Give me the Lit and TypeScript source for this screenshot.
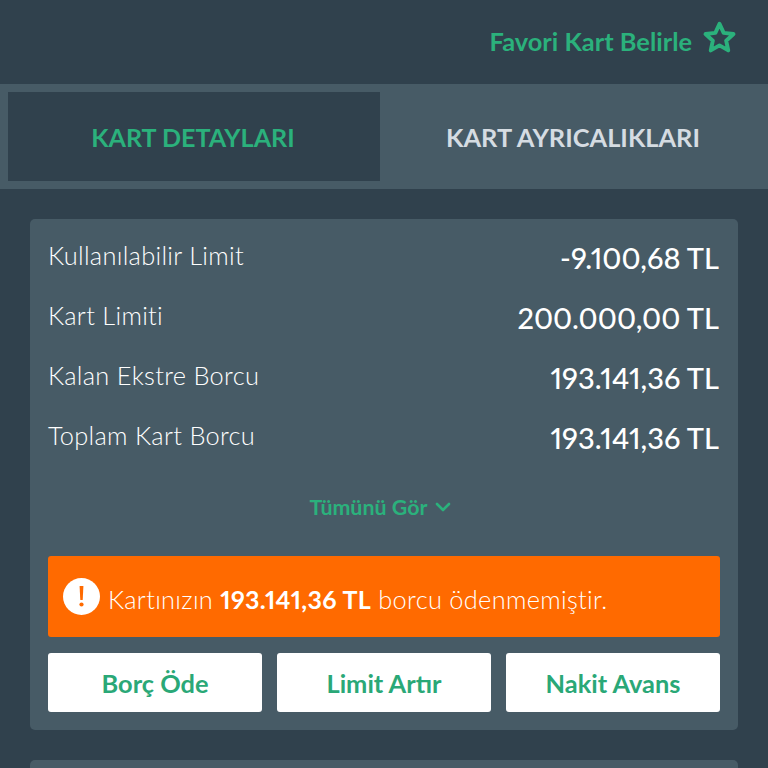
import { LitElement, html, css } from "lit";
import { customElement } from "lit/decorators.js";

const rows = [
  ["Kullanılabilir Limit", "-9.100,68 TL"],
  ["Kart Limiti", "200.000,00 TL"],
  ["Kalan Ekstre Borcu", "193.141,36 TL"],
  ["Toplam Kart Borcu", "193.141,36 TL"],
];

@customElement("app-root")
export class AppRoot extends LitElement {
  static styles = css`
    :host {
      display: block;
      width: 768px;
      height: 768px;
      overflow: hidden;
      background: #30414d;
      font-family: Lato, "Noto Sans", sans-serif;
      font-feature-settings: "pnum" 1;
      font-variant-numeric: proportional-nums;
      color: #fff;
    }
    .fav {
      height: 84px;
      box-sizing: border-box;
      display: flex;
      justify-content: flex-end;
      align-items: center;
      gap: 10px;
      padding: 0 31px 10px 0;
      color: #2bb17c;
      font-size: 25.4px;
      font-weight: 700;
    }
    .fav span { position: relative; top: 4px; }
    .fav svg { display: block; }
    .tabs {
      height: 105px;
      box-sizing: border-box;
      background: #475b66;
      padding: 8px 0 8px 8px;
      display: flex;
    }
    .tab {
      display: flex;
      align-items: center;
      justify-content: center;
      font-size: 25.4px;
      font-weight: 700;
      color: #d5dce2;
      flex: 1;
      padding-right: 2px;
    }
    .tab.on {
      flex: 0 0 372px;
      box-sizing: border-box;
      background: #30414d;
      color: #2bb17c;
      font-size: 25.1px;
    }
    .main { padding: 30px 30px 0; display: flex; flex-direction: column; gap: 30px; }
    .card {
      background: #475b66;
      border-radius: 5px;
      padding: 7px 18px 18px;
      display: flex;
      flex-direction: column;
    }
    .row {
      height: 60px;
      display: flex;
      justify-content: space-between;
      align-items: center;
      padding-right: 1px;
      padding-left: 1px;
    }
    .row .l { font-size: 25.4px; font-weight: 300; letter-spacing: 0.3px; position: relative; top: -1px; left: -1px; }
    .row .v { font-size: 29px; font-weight: 500; position: relative; top: 1px; }
    .more {
      display: flex;
      justify-content: center;
      align-items: center;
      gap: 8px;
      height: 40px;
      margin-top: 21px;
      padding-right: 7px;
      color: #2bb17c;
      font-size: 21.4px;
      font-weight: 700;
    }
    .alert {
      margin-top: 29px;
      height: 81px;
      box-sizing: border-box;
      background: #ff6a00;
      border-radius: 3px;
      display: flex;
      align-items: center;
      gap: 8px;
      padding: 4px 0 0 15px;
      font-size: 25.4px;
      font-weight: 300;
      letter-spacing: 0.3px;
    }
    .alert b { font-size: 25px; font-weight: 700; letter-spacing: 0.3px; }
    .alert svg { flex: none; position: relative; top: -2px; }
    .btns { display: flex; gap: 15px; margin-top: 16px; }
    .btn {
      flex: 1;
      height: 59px;
      background: #fff;
      border-radius: 3px;
      display: flex;
      align-items: center;
      justify-content: center;
      color: #2aa877;
      font-size: 25.4px;
      font-weight: 700;
    }
    .card.next { height: 60px; padding: 0; }
  `;

  render() {
    return html`
      <div class="fav">
        <span>Favori Kart Belirle</span>
        <svg width="35" height="35" viewBox="0 0 32 32" fill="none" stroke="#2bb17c" stroke-width="3.6" stroke-linejoin="round">
          <path d="M16 3.5l3.8 8.3 9 1-6.7 6.1 1.9 8.9-8-4.6-8 4.6 1.9-8.9-6.7-6.1 9-1z" />
        </svg>
      </div>
      <div class="tabs">
        <div class="tab on">KART DETAYLARI</div>
        <div class="tab">KART AYRICALIKLARI</div>
      </div>
      <div class="main">
        <div class="card">
          ${rows.map(
            ([l, v]) => html`<div class="row"><span class="l">${l}</span><span class="v">${v}</span></div>`
          )}
          <div class="more">
            <span>Tümünü Gör</span>
            <svg width="16" height="10" viewBox="0 0 16 10" fill="none" stroke="#2bb17c" stroke-width="2.6" stroke-linecap="round" stroke-linejoin="round">
              <path d="M2 2l6 6 6-6" />
            </svg>
          </div>
          <div class="alert">
            <svg width="37" height="37" viewBox="0 0 37 37">
              <circle cx="18.5" cy="18.5" r="18.5" fill="#fff" />
              <path d="M16.6 8h3.8l-.7 14h-2.4z" fill="#ff6a00" />
              <circle cx="18.5" cy="26.5" r="2.1" fill="#ff6a00" />
            </svg>
            <span>Kartınızın <b>193.141,36 TL</b> borcu ödenmemiştir.</span>
          </div>
          <div class="btns">
            <div class="btn">Borç Öde</div>
            <div class="btn">Limit Artır</div>
            <div class="btn">Nakit Avans</div>
          </div>
        </div>
        <div class="card next"></div>
      </div>
    `;
  }
}
